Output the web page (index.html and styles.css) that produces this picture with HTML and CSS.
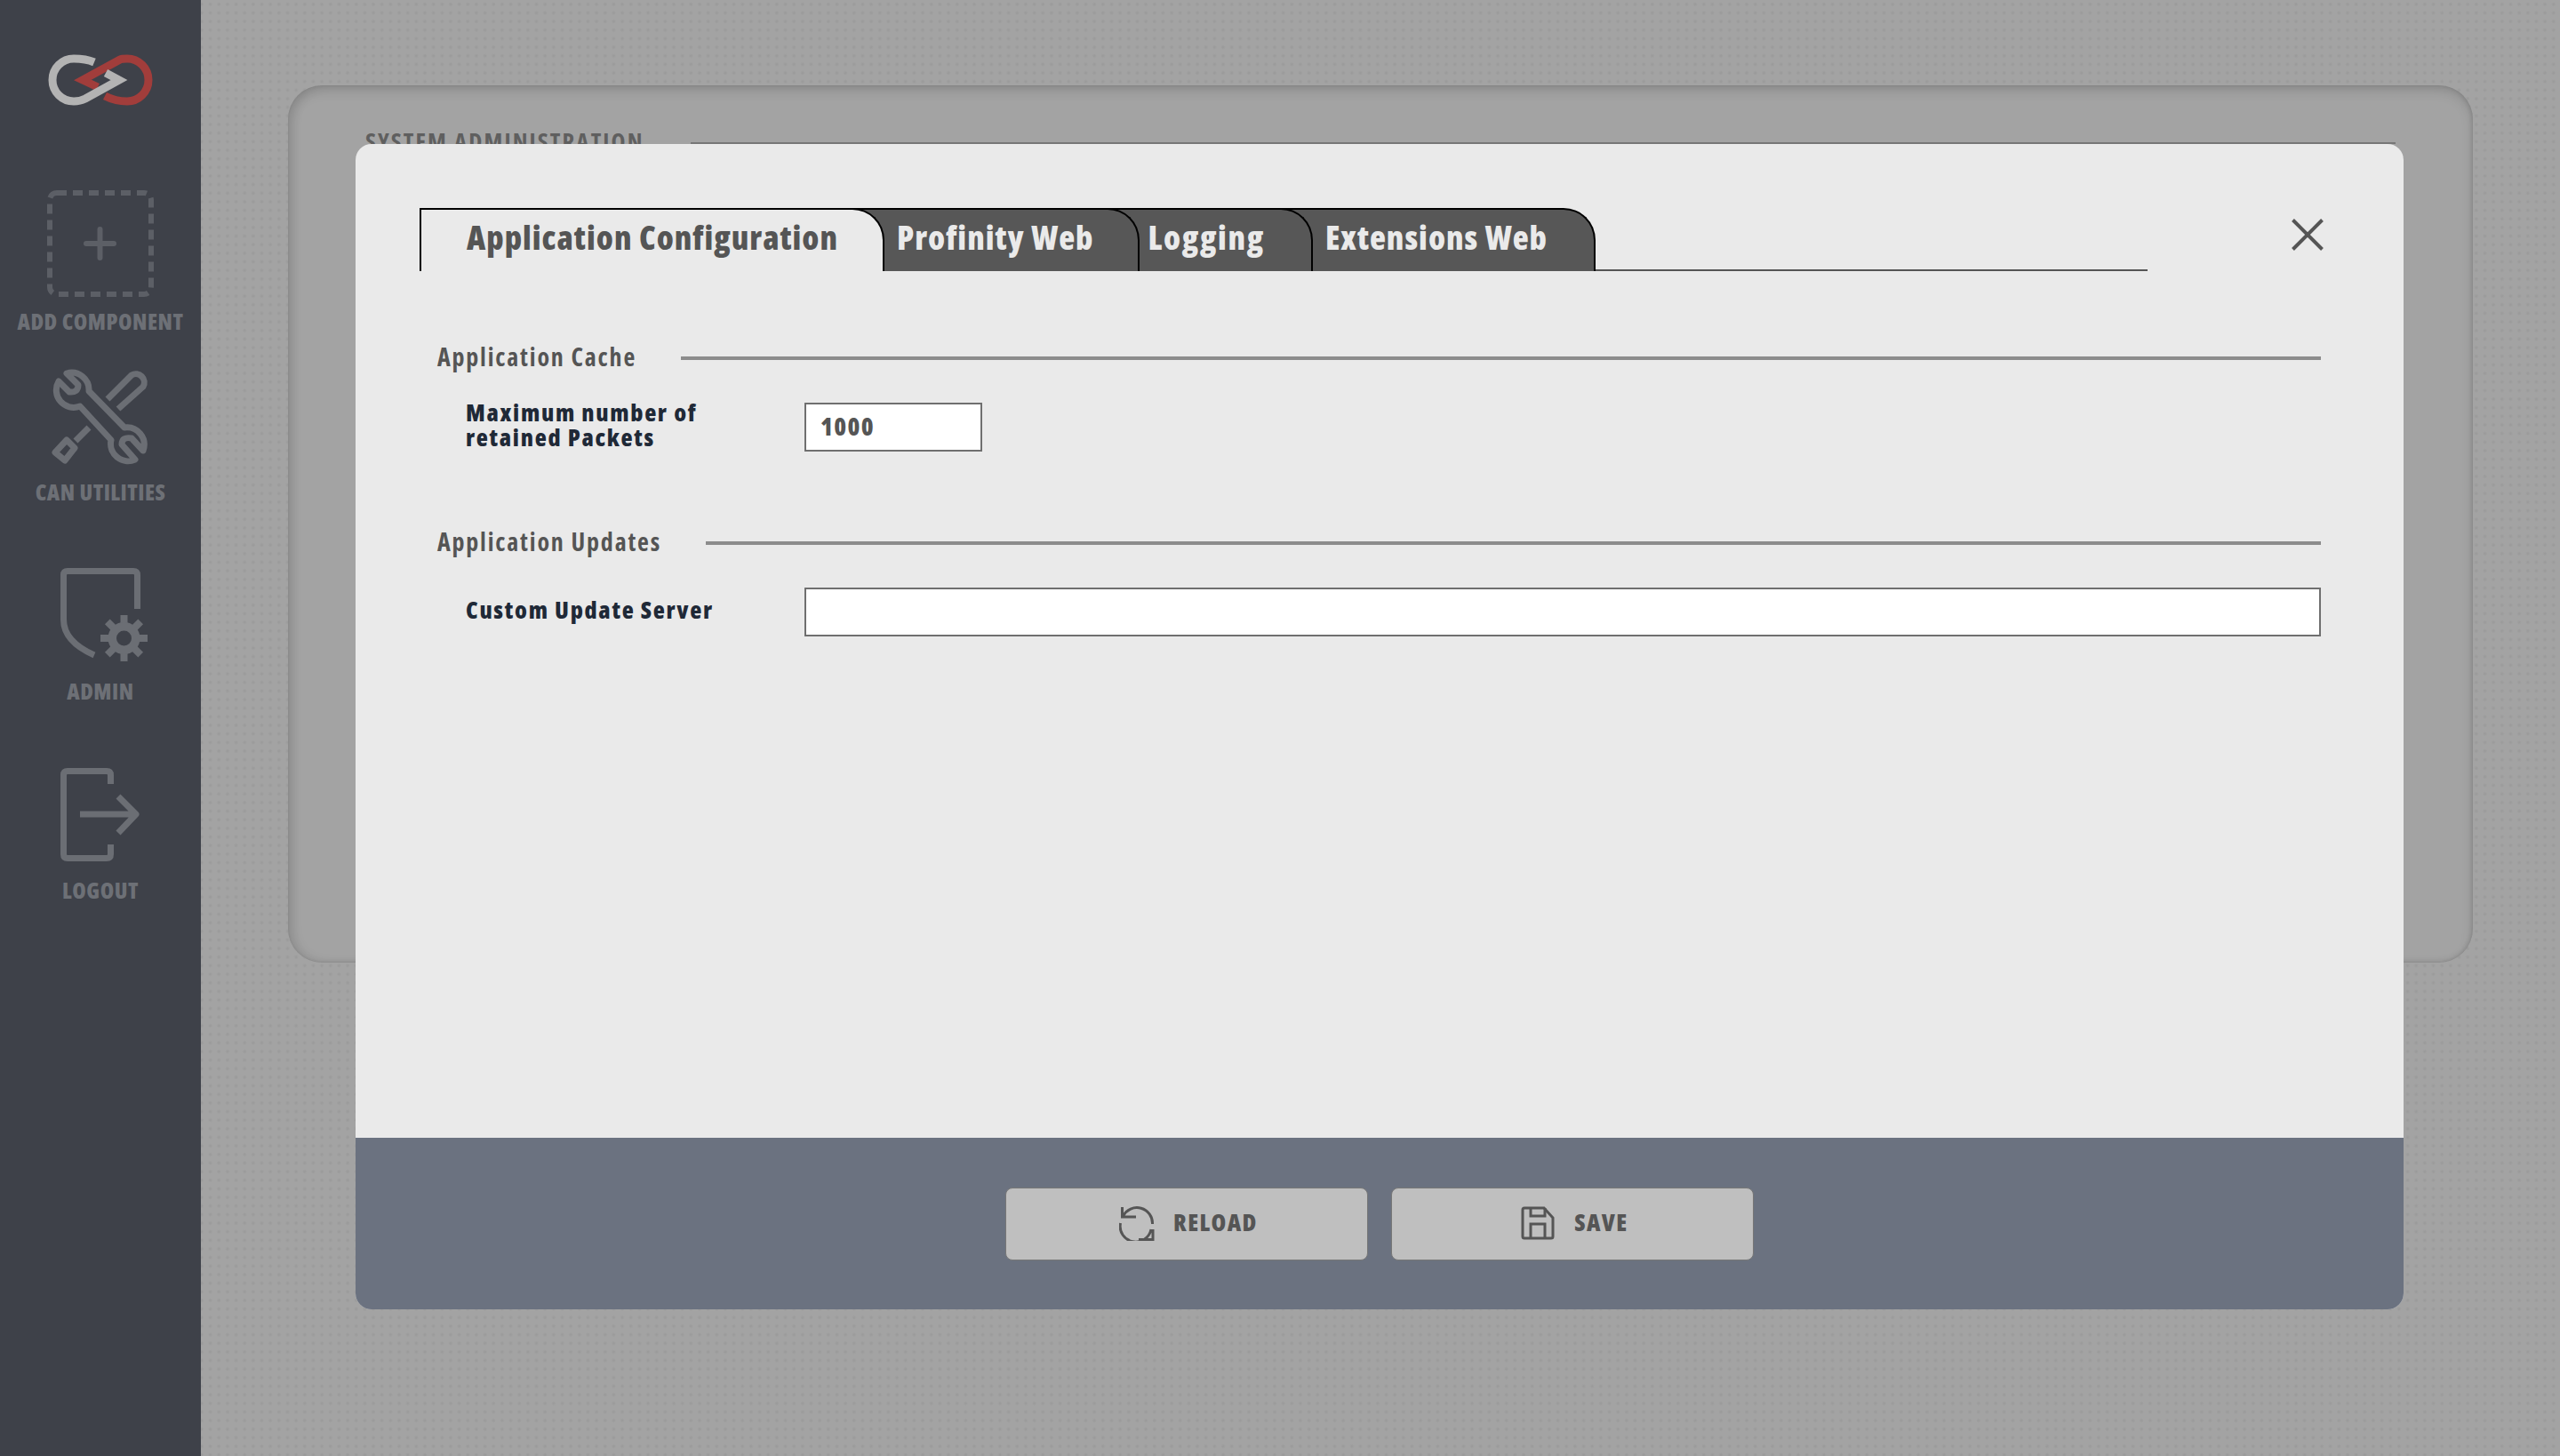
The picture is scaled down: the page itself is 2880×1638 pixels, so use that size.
FILE: index.html
```html
<!DOCTYPE html>
<html lang="en">
<head>
    <meta charset="UTF-8">
    <meta name="viewport" content="width=device-width, initial-scale=1.0">
    <title>System Administration</title>
    <link rel="stylesheet" href="styles.css">
</head>
<body>
    <aside class="sidebar">
        <svg class="logo" viewBox="53 61 120 58">
            <path class="logo-red" d="M118 108C126 112 134 114 143 114A24 24 0 0 0 143 66C140 66 137 66 135 67L93 90L110 98"/>
            <path class="logo-grey" d="M106 70C99 67 91 66 83 66A24 24 0 0 0 83 114C88 114 92 113 96 111L134 90L119 82"/>
        </svg>

        <div class="nav-item nav-add">
            <svg class="nav-icon" viewBox="53 214 120 120">
                <rect class="dash-box" x="56" y="217" width="114" height="114" rx="8"/>
                <path class="plus" d="M97 274H128M112.500 258V290"/>
            </svg>
            <span class="nav-label">ADD COMPONENT</span>
        </div>

        <div class="nav-item nav-can">
            <svg class="nav-icon" viewBox="53 412 120 112">
                <path class="icon-line" d="M75 418A19.500 19.500 0 0 1 100 438L140 479A19.500 19.500 0 0 1 161 505L148 491Q137 489 137 498L152 515A19.500 19.500 0 0 1 125 493L90 455A19.500 19.500 0 0 1 66 427L78 439Q88 440 88 431Z"/>
                <path class="icon-line" d="M121 447L148 420A9.500 9.500 0 0 1 161 433L133 458"/>
                <path class="icon-line" d="M100 479L85 494"/>
                <path class="icon-line" d="M62 507L75 493L84 502L73 516Z"/>
            </svg>
            <span class="nav-label">CAN UTILITIES</span>
        </div>

        <div class="nav-item nav-admin">
            <svg class="nav-icon" viewBox="53 635 120 110">
                <path class="icon-line" d="M154.500 683V645Q154.500 640.500 150 640.500H76Q71.500 640.500 71.500 645V695C71.500 714 88 727 106 735"/>
                <g class="gear">
                    <path d="M139.500 690V742M113 716H166M120.800 697.300L158.200 734.700M158.200 697.300L120.800 734.700"/>
                    <circle class="gear-body" cx="139.500" cy="716" r="18"/>
                    <circle class="gear-hole" cx="139.500" cy="716" r="8.500"/>
                </g>
            </svg>
            <span class="nav-label">ADMIN</span>
        </div>

        <div class="nav-item nav-logout">
            <svg class="nav-icon" viewBox="53 860 120 110">
                <path class="icon-line" d="M124.500 880V870Q124.500 865.500 120 865.500H76Q71.500 865.500 71.500 870V959Q71.500 963.500 76 963.500H120Q124.500 963.500 124.500 959V948"/>
                <path class="icon-line" d="M90 914H152M133 894L153 914L133 935"/>
            </svg>
            <span class="nav-label">LOGOUT</span>
        </div>
    </aside>

    <main class="content">
        <section class="panel">
            <div class="panel-head">
                <h2 class="panel-title">SYSTEM ADMINISTRATION</h2>
                <div class="panel-rule"></div>
            </div>
        </section>
    </main>

    <div class="modal">
        <button class="close-btn" type="button" aria-label="Close">
            <svg viewBox="0 0 36 36"><path d="M1.500 1.500L34.500 34.500M34.500 1.500L1.500 34.500"/></svg>
        </button>

        <div class="modal-body">
            <div class="tabs">
                <div class="tab tab-active">Application Configuration</div>
                <div class="tab tab-2">Profinity Web</div>
                <div class="tab tab-3">Logging</div>
                <div class="tab tab-4">Extensions Web</div>
                <div class="tabs-line"></div>
            </div>

            <section class="group group-cache">
                <div class="group-head">
                    <h3 class="group-title">Application Cache</h3>
                    <div class="group-rule"></div>
                </div>
                <div class="field">
                    <label class="field-label" for="maxPackets">Maximum number of<br>retained Packets</label>
                    <input class="field-input input-small" id="maxPackets" type="text" value="1000">
                </div>
            </section>

            <section class="group group-updates">
                <div class="group-head">
                    <h3 class="group-title">Application Updates</h3>
                    <div class="group-rule"></div>
                </div>
                <div class="field">
                    <label class="field-label" for="updateServer">Custom Update Server</label>
                    <input class="field-input" id="updateServer" type="text">
                </div>
            </section>
        </div>

        <div class="modal-footer">
            <button class="btn" type="button">
                <svg class="btn-icon" viewBox="0 0 40 40">
                    <path d="M4.500 12A17.500 17.500 0 0 1 37.500 21M3.500 2V13H19"/>
                    <path d="M36 27A17.500 17.500 0 0 1 1.500 20M38 27V38.500H22"/>
                </svg>
                <span class="btn-text">RELOAD</span>
            </button>
            <button class="btn" type="button">
                <svg class="btn-icon" viewBox="0 0 40 40">
                    <path d="M5 3H27L37 14V35Q37 37 35 37H5Q3 37 3 35V5Q3 3 5 3Z"/>
                    <path d="M12 3V12H28V3M12 37V21H28V37"/>
                </svg>
                <span class="btn-text">SAVE</span>
            </button>
        </div>
    </div>
</body>
</html>
```

FILE: styles.css
```css
* {
    box-sizing: border-box;
}
body {
    margin: 0;
    height: 100vh;
    display: flex;
    overflow: hidden;
    position: relative;
    font-family: "Open Sans", sans-serif;
    font-stretch: condensed;
    font-weight: 800;
    background-color: #a3a3a3;
    background-image: radial-gradient(circle, #9b9b9b 0.8px, transparent 2.6px);
    background-size: 9.67px 9.67px;
}

/* sidebar */
.sidebar {
    width: 226px;
    flex-shrink: 0;
    display: flex;
    flex-direction: column;
    align-items: center;
    background: #3e4149;
}
.logo {
    width: 120px;
    height: 58px;
    margin-top: 61px;
    margin-bottom: 95px;
}
.logo-grey, .logo-red {
    fill: none;
    stroke-width: 9;
    stroke-miterlimit: 6;
}
.logo-grey {
    stroke: #b3b3b3;
}
.logo-red {
    stroke: #a13d3b;
}
.nav-item {
    display: flex;
    flex-direction: column;
    align-items: center;
}
.nav-icon {
    width: 120px;
    display: block;
}
.nav-label {
    font-size: 25px;
    line-height: 30px;
    letter-spacing: 0.5px;
    color: #6d7076;
}
.nav-add .nav-icon {
    height: 120px;
}
.nav-add .nav-label {
    margin-top: 12px;
}
.nav-can {
    margin-top: 38px;
}
.nav-can .nav-icon {
    height: 112px;
}
.nav-can .nav-label {
    margin-top: 12px;
}
.nav-admin {
    margin-top: 69px;
}
.nav-admin .nav-icon {
    height: 110px;
}
.nav-admin .nav-label {
    margin-top: 15px;
}
.nav-logout {
    margin-top: 70px;
}
.nav-logout .nav-icon {
    height: 110px;
}
.nav-logout .nav-label {
    margin-top: 14px;
}
.dash-box {
    fill: none;
    stroke: #5c5f66;
    stroke-width: 6;
    stroke-dasharray: 11 7;
}
.plus {
    fill: none;
    stroke: #5c5f66;
    stroke-width: 6;
    stroke-linecap: round;
}
.icon-line {
    fill: none;
    stroke: #6b6e74;
    stroke-width: 7;
    stroke-linejoin: round;
}
.gear path {
    fill: none;
    stroke: #6b6e74;
    stroke-width: 8;
}
.gear-body {
    fill: #6b6e74;
}
.gear-hole {
    fill: #3e4149;
}

/* page behind the dialog */
.content {
    flex: 1;
    padding: 96px 98px 0;
}
.panel {
    height: 987px;
    background: #a3a3a3;
    border-radius: 38px;
    box-shadow: inset 0 6px 14px rgba(0,0,0,0.12), inset 6px 0 12px rgba(0,0,0,0.08), inset -2px 0 4px rgba(0,0,0,0.08), inset 0 -1px 3px rgba(0,0,0,0.03);
    padding: 44px 87px 0 87px;
}
.panel-head {
    display: flex;
    height: 38px;
}
.panel-title {
    margin: 0;
    font-size: 27px;
    line-height: 38px;
    letter-spacing: 2.1px;
    color: #5f5f5f;
    white-space: nowrap;
}
.panel-rule {
    flex: 1;
    height: 2px;
    margin: 20px 0 0 52px;
    background: #777;
}

/* dialog */
.modal {
    position: absolute;
    left: 400px;
    top: 162px;
    width: 2304px;
    height: 1311px;
    display: flex;
    flex-direction: column;
    background: #eaeaea;
    border-radius: 18px;
    overflow: hidden;
}
.close-btn {
    position: absolute;
    top: 84px;
    right: 90px;
    width: 36px;
    height: 36px;
    padding: 0;
    border: 0;
    background: none;
}
.close-btn svg {
    display: block;
    width: 36px;
    height: 36px;
}
.close-btn path {
    stroke: #555;
    stroke-width: 4;
    fill: none;
}
.modal-body {
    flex: 1;
    padding: 72px 93px 0 72px;
}
.tabs {
    display: flex;
    width: 1944px;
    height: 71px;
}
.tab {
    height: 71px;
    padding: 9px 52px 0;
    font-size: 37px;
    line-height: 44px;
    letter-spacing: 1px;
    white-space: nowrap;
    color: #eaeaea;
    background: #575757;
    border: solid #000;
    border-width: 2px 2px 0 0;
    border-top-right-radius: 36px;
    margin-left: -38px;
    position: relative;
}
.tab-active {
    margin-left: 0;
    padding-left: 51px;
    padding-right: 50px;
    color: #555;
    background: #eaeaea;
    border-width: 2px 2px 0 2px;
    z-index: 4;
}
.tab-2 {
    padding-right: 50px;
    z-index: 3;
}
.tab-3 {
    padding-left: 47px;
    letter-spacing: 1.7px;
    z-index: 2;
}
.tab-4 {
    z-index: 1;
}
.tabs-line {
    flex: 1;
    border-bottom: 2px solid #555;
}
.group {
    margin-left: 20px;
}
.group-cache {
    margin-top: 83px;
}
.group-updates {
    margin-top: 88px;
}
.group-head {
    display: flex;
    align-items: center;
    gap: 50px;
    height: 30px;
}
.group-title {
    margin: 0 0 5px;
    font-size: 28px;
    letter-spacing: 1.8px;
    color: #555;
    white-space: nowrap;
}
.group-rule {
    flex: 1;
    height: 4px;
    background: #8c8c8c;
}
.field {
    display: flex;
    align-items: center;
    height: 55px;
    margin-top: 35px;
    padding-left: 32px;
}
.field-label {
    width: 381px;
    flex-shrink: 0;
    margin-bottom: 5px;
    font-size: 27px;
    line-height: 28px;
    letter-spacing: 1.7px;
    color: #1f2937;
}
.field-input {
    flex: 1;
    min-width: 0;
    height: 55px;
    padding: 0 16px 4px;
    border: 2px solid #6f6f6f;
    border-radius: 0;
    background: #fff;
    font: inherit;
    font-size: 28px;
    letter-spacing: 1.4px;
    color: #555;
}
.input-small {
    flex: none;
    width: 200px;
}
.modal-footer {
    height: 193px;
    display: flex;
    align-items: center;
    justify-content: center;
    gap: 26px;
    background: #6b7280;
}
.btn {
    width: 408px;
    height: 82px;
    display: flex;
    align-items: center;
    justify-content: center;
    gap: 21px;
    padding: 0 0 2px 4px;
    border: 1px solid #777;
    border-radius: 8px;
    background: #bfbfbf;
    font: inherit;
    font-size: 27px;
    letter-spacing: 1.4px;
    color: #555;
}
.btn-text {
    margin-bottom: 3px;
}
.btn-icon {
    width: 40px;
    height: 40px;
    fill: none;
    stroke: #555;
    stroke-width: 3;
}
```
